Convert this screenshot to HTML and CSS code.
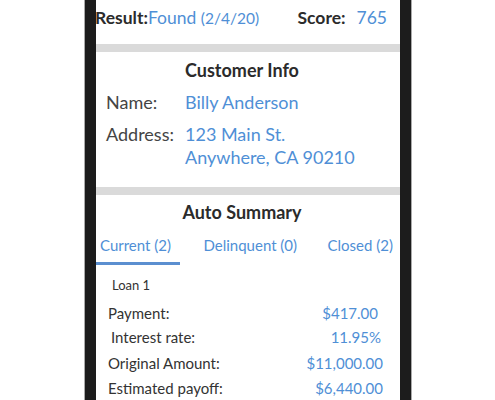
FILE: index.html
```html
<!DOCTYPE html>
<html lang="en">
<head>
    <meta charset="UTF-8">
    <title>Credit Report</title>
    <link rel="stylesheet" href="styles.css">
</head>
<body>
    <div class="phone">
        <div class="screen">
            <section class="result-row">
                <div><span class="label-bold">Result:</span><span class="blue">Found <small>(2/4/20)</small></span></div>
                <div><span class="label-bold">Score:</span><span class="blue score">765</span></div>
            </section>

            <div class="divider"></div>

            <section class="customer">
                <h2 class="section-title">Customer Info</h2>
                <div class="info-grid">
                    <span class="info-label">Name:</span>
                    <span class="blue">Billy Anderson</span>
                    <span class="info-label">Address:</span>
                    <span class="blue">123 Main St.<br>Anywhere, CA 90210</span>
                </div>
            </section>

            <div class="divider"></div>

            <section class="summary">
                <h2 class="section-title">Auto Summary</h2>
                <nav class="tabs">
                    <span class="tab active">Current (2)</span>
                    <span class="tab">Delinquent (0)</span>
                    <span class="tab">Closed (2)</span>
                </nav>
                <div class="loan">
                    <p class="loan-name">Loan 1</p>
                    <div class="loan-row payment"><span>Payment:</span><span class="blue">$417.00</span></div>
                    <div class="loan-row indent"><span>Interest rate:</span><span class="blue">11.95%</span></div>
                    <div class="loan-row"><span>Original Amount:</span><span class="blue">$11,000.00</span></div>
                    <div class="loan-row"><span>Estimated payoff:</span><span class="blue">$6,440.00</span></div>
                </div>
            </section>
        </div>
    </div>
</body>
</html>
```

FILE: styles.css
```css
body { margin: 0; background: #fff; font-family: 'Lato', 'Open Sans', sans-serif; color: #3a3a3a; }

.phone { width: 326px; margin-left: 85px; height: 400px; overflow: hidden; box-shadow: -1px 0 0 #aaa, 1px 0 0 #aaa; }
.screen { height: 100%; border-left: 11px solid #1c1c1c; border-right: 11px solid #1c1c1c; background: #fff; }

.blue { color: #4f8fd6; }
.label-bold { font-weight: 700; color: #2b2b2b; }

.result-row { height: 44px; display: flex; justify-content: space-between; align-items: center; padding: 0 13px 9px 0; box-sizing: border-box; font-size: 17.5px; margin-left: -1px; }
.result-row small { font-size: 15.5px; }
.result-row .score { margin-left: 11px; }

.divider { height: 8px; background: #dadada; }

.section-title { margin: 0; padding-right: 12px; text-align: center; font-size: 18px; font-weight: 700; color: #2b2b2b; }

.customer { height: 135px; padding-top: 7px; box-sizing: border-box; }
.info-grid { display: grid; grid-template-columns: 79px 1fr; padding: 10px 0 0 10px; row-gap: 9px; font-size: 18px; line-height: 23px; }
.info-label { color: #444; }

.summary { padding-top: 6px; }
.tabs { display: flex; justify-content: space-between; margin-top: 13px; font-size: 15px; }
.tab { color: #4f8fd6; padding: 0 7px 8px 4px; }
.tab.active { border-bottom: 3px solid #5b8fd0; padding-left: 4px; padding-right: 6px; width: 74px; }

.loan { padding: 0 17px 0 12px; font-size: 15px; color: #333; }
.loan-name { margin: 12px 0 11px 4px; font-size: 13px; }
.loan-row { display: flex; justify-content: space-between; height: 25px; line-height: 18px; }
.loan-row.payment { padding-right: 5px; height: 24px; }
.loan-row.indent { padding-left: 3px; padding-right: 2px; height: 26px; }
```
